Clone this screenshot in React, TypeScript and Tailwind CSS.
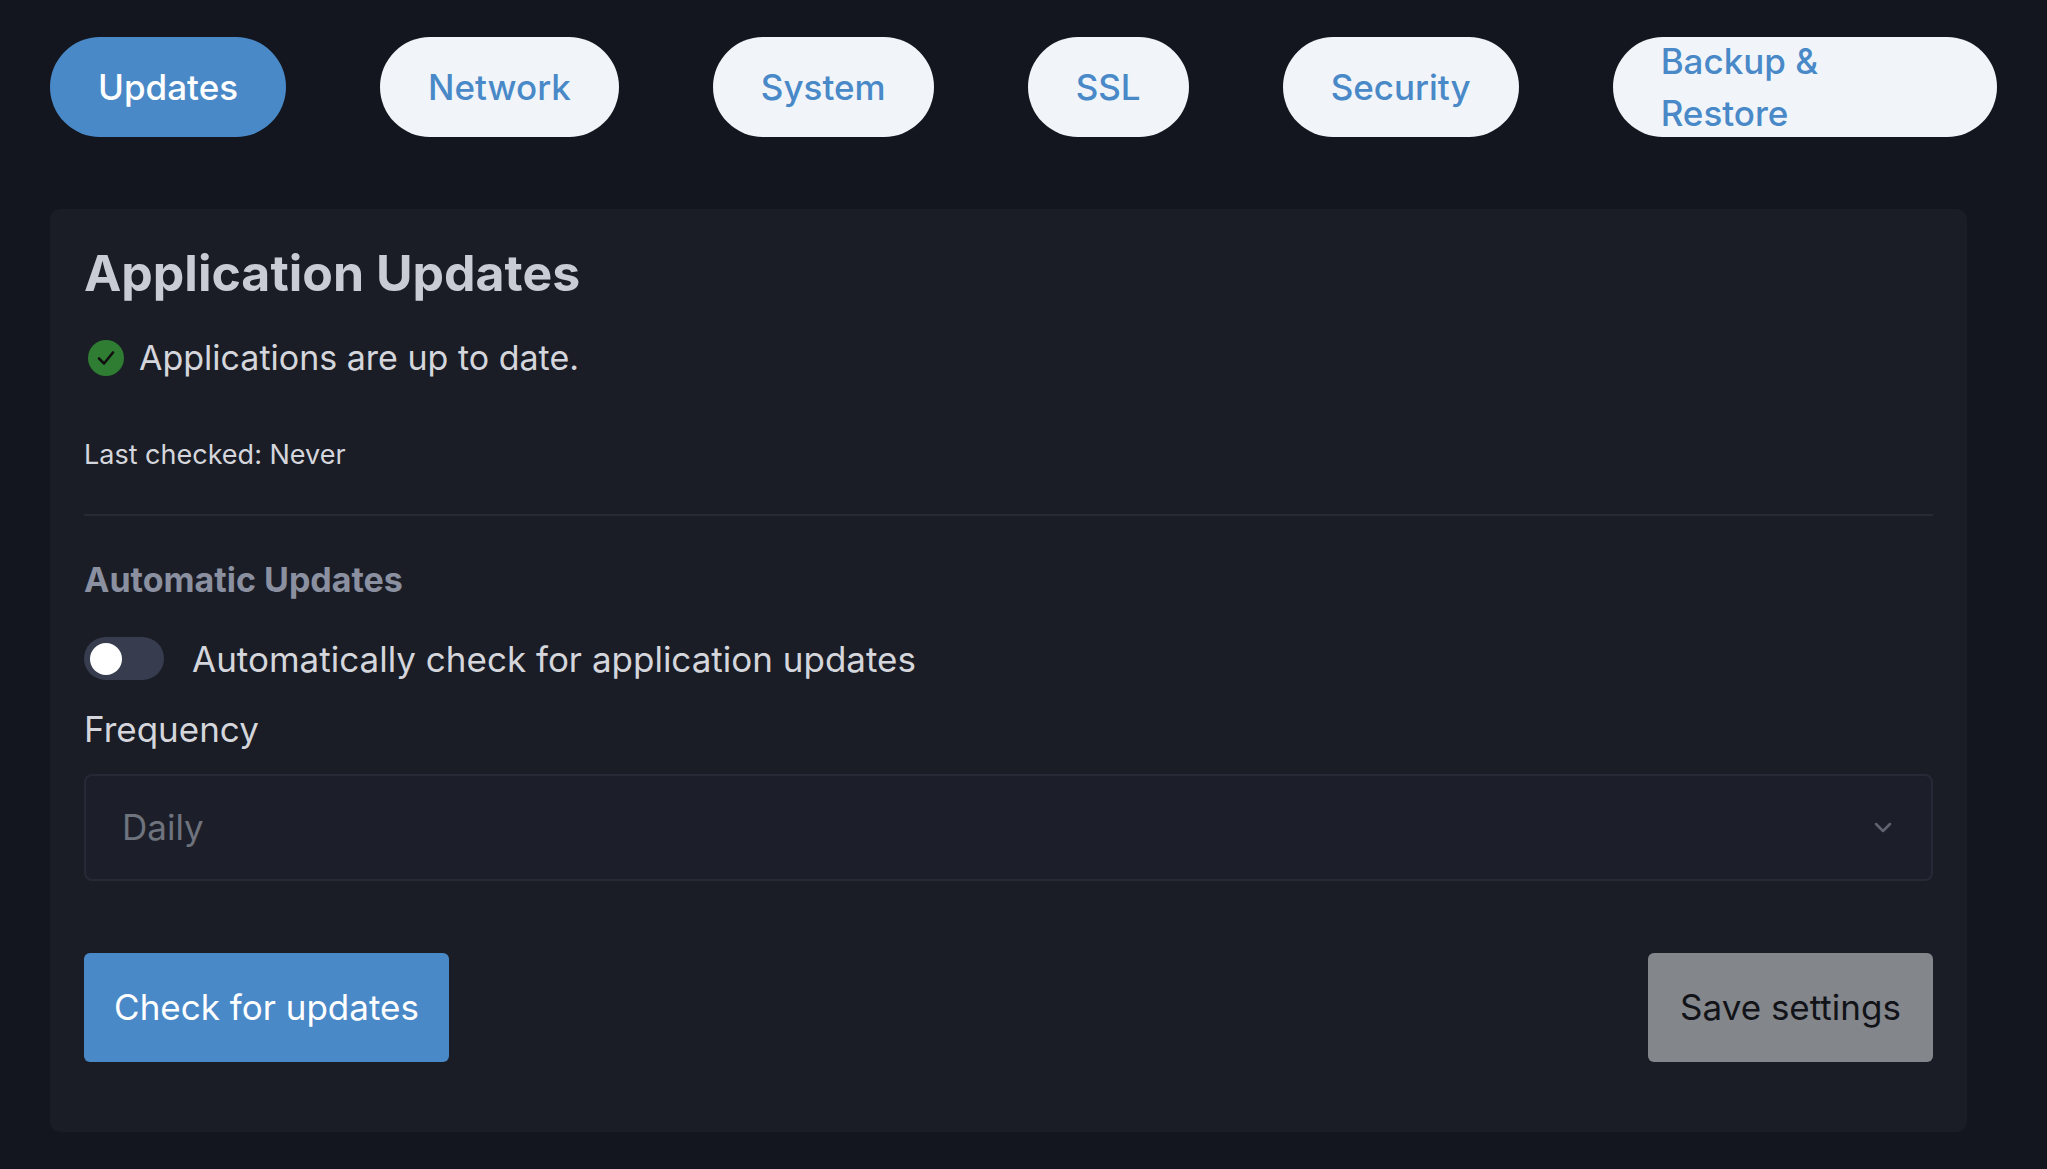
import React from "react";

const tabs = ["Updates", "Network", "System", "SSL", "Security", "Backup & Restore"];

export default function App() {
  return (
    <div className="min-h-[1169px] bg-[#13161e] px-[50px] pt-[37px] pb-[45px]" style={{ fontFamily: "Inter, 'Noto Sans', sans-serif" }}>
      <div className="flex gap-[94px]">
        {tabs.map((t, i) => (
          <div
            key={t}
            className={`h-[100px] px-[48px] rounded-full flex items-center text-[35px] font-medium ${i === 0 ? "bg-[#4a89c8] text-white" : "bg-[#f1f5f9] text-[#4a89c8]"}`}
          >
            {t}
          </div>
        ))}
      </div>
      <div className="mt-[72px] bg-[#1a1d26] rounded-[10px] w-[1917px] px-[34px] pt-[34px] pb-[70px]">
        <h1 className="text-[50px] font-bold text-[#c9ccd4] leading-[60px]">Application Updates</h1>
        <div className="mt-[29px] flex items-center gap-[15px] pl-[4px]">
          <svg width="36" height="36" viewBox="0 0 36 36">
            <circle cx="18" cy="18" r="18" fill="#2e7d32" />
            <path d="M11 18.5l5 5 9-11" stroke="#111" strokeWidth="2.6" fill="none" strokeLinecap="round" strokeLinejoin="round" />
          </svg>
          <span className="text-[34px] text-[#d4d6dc]">Applications are up to date.</span>
        </div>
        <div className="mt-[52px] text-[27px] text-[#d4d6dc]">Last checked: Never</div>
        <div className="mt-[38px] h-[2px] bg-[#262a36]" />
        <div className="mt-[38px] text-[34px] font-bold text-[#8a90a0]">Automatic Updates</div>
        <div className="mt-[28px] flex items-center gap-[28px]">
          <div className="w-[80px] h-[43px] rounded-full bg-[#373d4f] flex items-center pl-[6px]">
            <div className="w-[32px] h-[32px] rounded-full bg-white" />
          </div>
          <span className="text-[35px] text-[#d4d6dc]">Automatically check for application updates</span>
        </div>
        <div className="mt-[18px] text-[35px] text-[#d4d6dc]">Frequency</div>
        <div className="mt-[18px] h-[107px] border-2 border-[#262a36] rounded-[8px] bg-[#1c1f29] flex items-center justify-between pl-[36px] pr-[36px]">
          <span className="text-[35px] text-[#6f737d]">Daily</span>
          <svg width="24" height="24" viewBox="0 0 24 24" fill="none" stroke="#5f6470" strokeWidth="2.5" strokeLinecap="round" strokeLinejoin="round">
            <path d="M5 9l7 7 7-7" />
          </svg>
        </div>
        <div className="mt-[72px] flex justify-between">
          <button className="h-[109px] w-[365px] rounded-[6px] bg-[#4a89c8] text-white text-[35px]">Check for updates</button>
          <button className="h-[109px] w-[285px] rounded-[6px] bg-[#83868b] text-[#111318] text-[35px]">Save settings</button>
        </div>
      </div>
    </div>
  );
}
